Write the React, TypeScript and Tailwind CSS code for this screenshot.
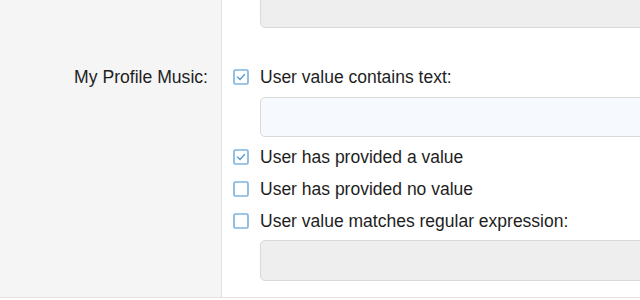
import React from "react";

interface Option {
  id: string;
  label: string;
  checked: boolean;
  input?: "active" | "disabled";
}

const options: Option[] = [
  { id: "contains", label: "User value contains text:", checked: true, input: "active" },
  { id: "provided", label: "User has provided a value", checked: true },
  { id: "empty", label: "User has provided no value", checked: false },
  { id: "regex", label: "User value matches regular expression:", checked: false, input: "disabled" },
];

// Checkbox desenhado com svg pra ficar igual ao print
function CheckBox({ checked }: { checked: boolean }) {
  return (
    <svg width="16" height="16" viewBox="0 0 16 16" className="shrink-0">
      <rect x="1" y="1" width="14" height="14" rx="1.5" fill="white" stroke="#7fb4e0" strokeWidth="1.7" />
      {checked && (
        <polyline points="4.5,8 7,10.5 11.5,5.5" fill="none" stroke="#5b9bd1" strokeWidth="1.4" strokeLinecap="round" strokeLinejoin="round" />
      )}
    </svg>
  );
}

export default function App() {
  return (
    <div
      className="w-[640px] h-[300px] overflow-hidden bg-white text-[#1e1e1e]"
      style={{ fontFamily: '"Liberation Sans", Arial, sans-serif' }}
    >
      <div className="grid grid-cols-[222px_1fr] border-b border-[#e4e4e4]">
        {/* linha anterior (cortada em cima) */}
        <div className="bg-[#f5f5f5] border-r border-[#e2e2e2]" />
        <div className="pl-[38px] pb-[37px]">
          <div className="-mt-[12px] h-[40px] w-[420px] rounded-[5px] border border-[#d9d9d9] bg-[#eeeeee]" />
        </div>

        {/* Campo atual */}
        <div className="bg-[#f5f5f5] border-r border-[#e2e2e2] pr-[13px] text-right">
          <div className="h-[24px] leading-[24px] text-[17.6px]">My Profile Music:</div>
        </div>
        <div className="pl-[11px] pb-[16px]">
          {options.map((opt, i) => (
            <div key={opt.id} className={i === 0 ? "" : "mt-[8px]"}>
              <label className="flex items-center gap-[11px] h-[24px] text-[17.5px] leading-[24px]">
                <CheckBox checked={opt.checked} />
                <span>{opt.label}</span>
              </label>
              {opt.input && (
                <div
                  className={
                    opt.input === "active"
                      ? "ml-[27px] mt-[8px] h-[40px] w-[420px] rounded-[5px] border border-[#d9d9d9] bg-[#f6faff]"
                      : "ml-[27px] mt-[7px] h-[41px] w-[420px] rounded-[5px] border border-[#d9d9d9] bg-[#eeeeee]"
                  }
                />
              )}
            </div>
          ))}
        </div>
      </div>
    </div>
  );
}
